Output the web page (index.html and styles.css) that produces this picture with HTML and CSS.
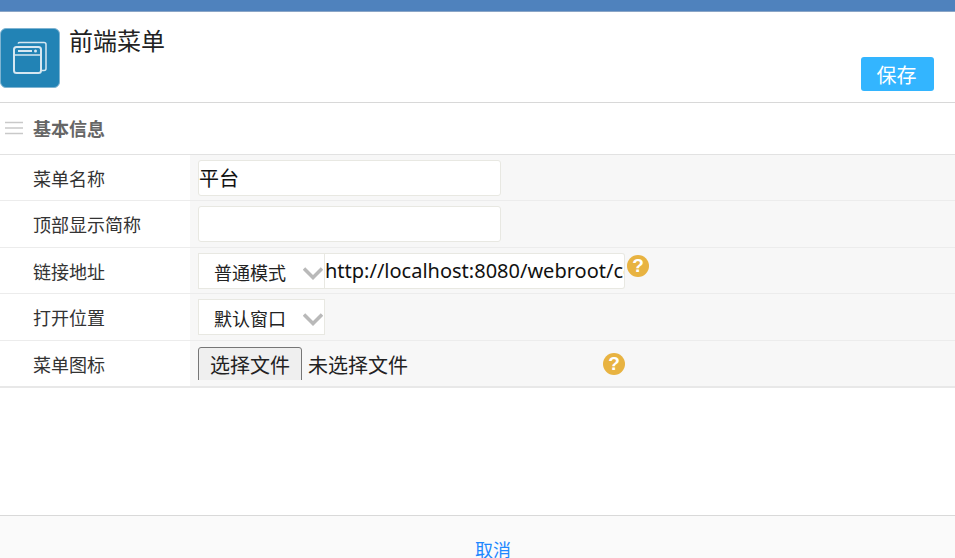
FILE: index.html
```html
<!DOCTYPE html>
<html lang="zh">
<head>
<meta charset="utf-8">
<title>前端菜单</title>
<link rel="stylesheet" href="styles.css">
</head>
<body>
<div class="topbar"></div>
<header class="head">
  <div class="logo">
    <svg width="60" height="60" viewBox="0 0 60 60" fill="none" stroke="#d6e7f1" stroke-width="1.5">
      <path d="M18 15.500a2 2 0 0 1 2-1h24a2 2 0 0 1 2 2v24a2 2 0 0 1-2 2h-3"/>
      <rect x="14" y="19" width="27" height="26" rx="2.500" stroke-width="2"/>
      <path d="M14 27h27" stroke-width="1.500"/>
      <path d="M18 23h14" stroke-width="2"/>
      <circle cx="35.500" cy="23" r="1.500" fill="#d6e7f1" stroke="none"/>
    </svg>
  </div>
  <h1 class="title">前端菜单</h1>
  <button class="save" type="button">保存</button>
</header>
<div class="section">
  <svg class="bars" width="18" height="14" viewBox="0 0 18 14" stroke="#c9c9c9" stroke-width="1.500"><path d="M0 1.500h18M0 7h18M0 12.500h18"/></svg>
  <span class="section-name">基本信息</span>
</div>
<form class="form">
  <div class="row">
    <label class="label">菜单名称</label>
    <div class="field"><input class="text" type="text" value="平台"></div>
  </div>
  <div class="row">
    <label class="label">顶部显示简称</label>
    <div class="field"><input class="text" type="text"></div>
  </div>
  <div class="row">
    <label class="label">链接地址</label>
    <div class="field">
      <span class="select">普通模式
        <svg class="chev" width="20" height="13" viewBox="0 0 20 13" fill="none" stroke="#b9b9b9" stroke-width="3.500"><path d="M1 1.500l9 9 9-9"/></svg>
      </span>
      <input class="text url" type="text" value="http://localhost:8080/webroot/common/index">
      <span class="help">?</span>
    </div>
  </div>
  <div class="row">
    <label class="label">打开位置</label>
    <div class="field">
      <span class="select">默认窗口
        <svg class="chev" width="20" height="13" viewBox="0 0 20 13" fill="none" stroke="#b9b9b9" stroke-width="3.500"><path d="M1 1.500l9 9 9-9"/></svg>
      </span>
    </div>
  </div>
  <div class="row last">
    <label class="label">菜单图标</label>
    <div class="field">
      <div class="file-clip">
        <span class="file-btn">选择文件</span>
        <span class="file-name">未选择文件</span>
      </div>
      <span class="help help-file">?</span>
    </div>
  </div>
</form>
<div class="spacer"></div>
<footer class="foot"><a class="cancel" href="#">取消</a></footer>
</body>
</html>
```

FILE: styles.css
```css
* { box-sizing: border-box; }
html, body { margin: 0; height: 100%; }
body {
  width: 955px;
  height: 558px;
  overflow: hidden;
  display: flex;
  flex-direction: column;
  background: #fff;
  color: #222;
  font-family: "Noto Sans CJK SC", "Noto Sans", sans-serif;
  font-size: 18px;
}
.topbar { height: 12px; flex: none; background: #4f82bd; border-bottom: 1px solid #8aa5c6; }
.head { height: 91px; flex: none; position: relative; display: flex; padding-top: 16px; border-bottom: 1px solid #d8d8d8; }
.logo { width: 60px; height: 60px; border-radius: 6px; background: #2283b5; border: 1px solid #7fb4d2; flex: none; }
.logo svg { display: block; margin: -1px; }
.title { margin: -2px 0 0 9px; font-size: 24px; font-weight: 400; line-height: 28px; color: #222; }
.save {
  position: absolute; left: 861px; top: 45px; width: 73px; height: 34px;
  background: #33b5ff; color: #fff; border: 0; border-radius: 3px;
  font: 20px/33px "Noto Sans CJK SC", sans-serif; padding: 0 2px 0 0;
}
.section { height: 51.5px; flex: none; display: flex; align-items: center; border-bottom: 1px solid #e2e2e2; }
.bars { margin: 0 0 1px 5px; flex: none; }
.section-name { margin: 0 0 0 10px; font-size: 18px; font-weight: 700; color: #666; }
.form { flex: none; }
.row { height: 46.5px; display: flex; border-bottom: 1px solid #ececec; }
.row.last { height: 47px; border-bottom: 2px solid #e8e8e8; }
.label { width: 190px; flex: none; padding-left: 33px; line-height: 47px; font-size: 18px; color: #333; }
.field { flex: 1; position: relative; background: #f7f7f7; padding: 5px 0 0 8px; display: flex; align-items: flex-start; }
.text {
  width: 303px; height: 36px; padding: 0; background: #fff; color: #111;
  border: 1px solid #e8e8e2; border-radius: 3px; outline: 0;
  font: 20px "Noto Sans", "Noto Sans CJK SC", sans-serif;
}
.url { width: 300px; border-radius: 0 3px 3px 0; border-left: 0; padding: 0; }
.select {
  width: 127px; height: 36px; flex: none; position: relative; padding: 1px 0 0 15px;
  background: #fff; border: 1px solid #e8e8e2; font-size: 18px; line-height: 34px; color: #222;
}
.chev { position: absolute; left: 104px; top: 13px; }
.help {
  width: 22px; height: 22px; margin: 2px 0 0 2px; flex: none; border-radius: 50%;
  background: #e8b341; color: #fff; text-align: center;
  font: 700 19px/22px "Liberation Sans", sans-serif;
}
.file-clip { height: 33px; margin-top: 1px; overflow: hidden; display: flex; align-items: flex-start; flex: none; }
.file-btn {
  width: 104px; height: 44px; flex: none; text-align: center;
  background: #efefef; border: 1px solid #767676; border-radius: 3px 3px 0 0;
  line-height: 33px; color: #222; font-size: 20px;
}
.file-name { margin-left: 6px; line-height: 35px; color: #222; font-size: 20px; }
.help-file { position: absolute; left: 413px; top: 12px; margin: 0; }
.spacer { flex: 1; }
.foot { height: 43px; flex: none; background: #fafafa; border-top: 1px solid #d9d9d9; padding-top: 19px; }
.cancel { color: #1e88ff; text-decoration: none; font-size: 18px; line-height: 28px; display: block; width: 40px; margin-left: 475px; }
```
